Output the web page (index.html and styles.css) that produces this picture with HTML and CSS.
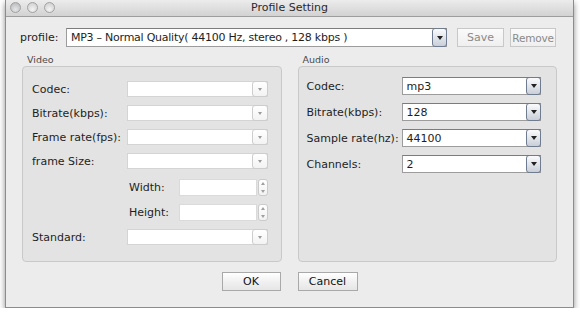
FILE: index.html
```html
<!DOCTYPE html>
<html lang="en">
<head>
    <meta charset="UTF-8">
    <meta name="viewport" content="width=device-width, initial-scale=1.0">
    <title>Profile Setting</title>
    <link rel="stylesheet" href="styles.css">
</head>
<body>
    <div class="window">
        <div class="titlebar">
            <div class="lights">
                <span class="light"></span>
                <span class="light"></span>
                <span class="light"></span>
            </div>
            <div class="title">Profile Setting</div>
        </div>

        <div class="content">
            <div class="profile-row">
                <label class="profile-label">profile:</label>
                <div class="select active profile-select">
                    <span class="value">MP3 – Normal Quality( 44100 Hz, stereo , 128 kbps )</span>
                    <span class="arrow"></span>
                </div>
                <button class="btn btn-disabled btn-save">Save</button>
                <button class="btn btn-disabled btn-remove">Remove</button>
            </div>

            <div class="groups">
                <div class="group">
                    <div class="group-title">Video</div>
                    <div class="group-box video-box">
                        <div class="row">
                            <label>Codec:</label>
                            <div class="select disabled"><span class="value"></span><span class="arrow"></span></div>
                        </div>
                        <div class="row">
                            <label>Bitrate(kbps):</label>
                            <div class="select disabled"><span class="value"></span><span class="arrow"></span></div>
                        </div>
                        <div class="row">
                            <label>Frame rate(fps):</label>
                            <div class="select disabled"><span class="value"></span><span class="arrow"></span></div>
                        </div>
                        <div class="row">
                            <label>frame Size:</label>
                            <div class="select disabled"><span class="value"></span><span class="arrow"></span></div>
                        </div>
                        <div class="row spin-row first-spin">
                            <label>Width:</label>
                            <div class="spin"><span class="value"></span><span class="spinner"><i class="up"></i><i class="down"></i></span></div>
                        </div>
                        <div class="row spin-row">
                            <label>Height:</label>
                            <div class="spin"><span class="value"></span><span class="spinner"><i class="up"></i><i class="down"></i></span></div>
                        </div>
                        <div class="row">
                            <label>Standard:</label>
                            <div class="select disabled"><span class="value"></span><span class="arrow"></span></div>
                        </div>
                    </div>
                </div>

                <div class="group">
                    <div class="group-title">Audio</div>
                    <div class="group-box audio-box">
                        <div class="row">
                            <label>Codec:</label>
                            <div class="select active"><span class="value">mp3</span><span class="arrow"></span></div>
                        </div>
                        <div class="row">
                            <label>Bitrate(kbps):</label>
                            <div class="select active"><span class="value">128</span><span class="arrow"></span></div>
                        </div>
                        <div class="row">
                            <label>Sample rate(hz):</label>
                            <div class="select active"><span class="value">44100</span><span class="arrow"></span></div>
                        </div>
                        <div class="row">
                            <label>Channels:</label>
                            <div class="select active"><span class="value">2</span><span class="arrow"></span></div>
                        </div>
                    </div>
                </div>
            </div>

            <div class="actions">
                <button class="btn btn-ok">OK</button>
                <button class="btn btn-cancel">Cancel</button>
            </div>
        </div>
    </div>
</body>
</html>
```

FILE: styles.css
```css
body {
    margin: 0;
    padding: 0;
    background-color: #ffffff;
    font-family: "DejaVu Sans", "Liberation Sans", sans-serif;
    font-size: 11px;
    color: #1e1e1e;
}

.window {
    margin-left: 5px;
    width: 569px;
    height: 308px;
    box-sizing: border-box;
    background-color: #ececec;
    border: 1px solid #8c8c8c;
    border-top: none;
    box-shadow: 0 3px 6px rgba(0, 0, 0, 0.45);
}

/* title bar */
.titlebar {
    position: relative;
    height: 16px;
    border-bottom: 1px solid #9d9d9d;
    background: linear-gradient(#ececec, #d2d2d2);
}

.lights {
    display: flex;
    gap: 6px;
    padding: 2px 0 0 4px;
}

.light {
    width: 9px;
    height: 9px;
    border-radius: 50%;
    border: 1px solid #a2a2a2;
    background: radial-gradient(circle at 50% 70%, #f4f4f4, #c9c9c9);
}

.light:first-child {
    background: radial-gradient(circle at 50% 70%, #e6e6e6, #b0b4b8);
}

.title {
    position: absolute;
    top: 0;
    left: 0;
    right: 0;
    text-align: center;
    line-height: 16px;
    color: #2a2a2a;
}

/* profile row */
.profile-row {
    display: flex;
    align-items: center;
    height: 19px;
    margin-top: 11px;
    padding-left: 14px;
}

.profile-label {
    width: 46px;
    font-size: 11px;
}

.profile-select {
    width: 381px;
    height: 19px;
}

.profile-select .value {
    font-size: 10.5px;
    letter-spacing: -0.25px;
}

.btn-save {
    margin-left: 10px;
    width: 47px;
}

.btn-remove {
    margin-left: 6px;
    width: 46px;
}

/* buttons */
.btn {
    height: 19px;
    padding: 0;
    font-family: inherit;
    font-size: 11px;
    color: #111;
    border: 1px solid #a9a9a9;
    border-radius: 0;
    background: linear-gradient(#ffffff, #f1f1f1 50%, #e6e6e6);
}

.btn-disabled {
    color: #8a8a8a;
    border-color: #c8c8c8;
    background: linear-gradient(#fafafa, #efefef);
}

.btn-remove {
    font-size: 10.5px;
    letter-spacing: -0.2px;
}

/* selects */
.select {
    display: flex;
    align-items: center;
    box-sizing: border-box;
    position: relative;
    background-color: #ffffff;
    border: 1px solid #9c9c9c;
    border-top-color: #7c7c7c;
}

.select .value {
    flex: 1;
    padding-left: 4px;
    font-size: 11px;
    white-space: nowrap;
}

.select .arrow {
    position: absolute;
    right: -1px;
    top: -1px;
    bottom: -1px;
    width: 15px;
    box-sizing: border-box;
    border: 1px solid #6f7b8f;
    border-radius: 3px;
    background: linear-gradient(#fbfbfc, #dfe3ea 55%, #c9ced8);
}

.select .arrow::after {
    content: "";
    position: absolute;
    left: 50%;
    top: 50%;
    margin: -2px 0 0 -3px;
    border-left: 3px solid transparent;
    border-right: 3px solid transparent;
    border-top: 4px solid #222;
}

.select.disabled {
    border-color: #d4d4d4;
}

.select.disabled .arrow {
    width: 16px;
    border-color: #cdcdcd;
    background: linear-gradient(#ffffff, #f3f3f3);
}

.select.disabled .arrow::after {
    border-top-color: #9a9a9a;
    margin: -1px 0 0 -2px;
    border-left-width: 2px;
    border-right-width: 2px;
    border-top-width: 3px;
}

/* groups */
.groups {
    display: flex;
    gap: 16px;
    margin-top: 6px;
    padding: 0 16px;
}

.group {
    flex: 1;
}

.group-title {
    height: 13px;
    line-height: 13px;
    padding-left: 5px;
    font-size: 9.5px;
    color: #4a4a4a;
}

.group-box {
    height: 196px;
    box-sizing: border-box;
    border: 1px solid #c9c9c9;
    border-radius: 4px;
    background-color: #e3e3e3;
}

.video-box {
    padding: 14px 13px 0 9px;
}

.audio-box {
    padding: 10px 15px 0 8px;
}

.row {
    display: flex;
    align-items: center;
}

.row + .row {
    margin-top: 8px;
}

.row label {
    width: 95px;
    flex-shrink: 0;
    font-size: 11px;
    white-space: nowrap;
}

.row .select {
    flex: 1;
}

.video-box .row {
    height: 16px;
}

.video-box .row .select {
    height: 16px;
}

.audio-box .row {
    height: 18px;
}

.audio-box .row .select {
    height: 18px;
}

/* width / height spinners */
.video-box .spin-row {
    height: 17px;
    padding-left: 97px;
}

.video-box .first-spin {
    margin-top: 10px;
}

.spin-row label {
    width: 50px;
}

.spin {
    flex: 1;
    display: flex;
    height: 17px;
    position: relative;
}

.spin .value {
    flex: 1;
    background-color: #ffffff;
    border: 1px solid #dadada;
}

.spinner {
    width: 10px;
    margin-left: 1px;
    box-sizing: border-box;
    border: 1px solid #cbcbcb;
    border-radius: 3px;
    background: linear-gradient(#ffffff, #f2f2f2);
    display: flex;
    flex-direction: column;
    align-items: center;
    justify-content: space-around;
}

.spinner i {
    width: 0;
    height: 0;
    border-left: 2px solid transparent;
    border-right: 2px solid transparent;
}

.spinner .up {
    border-bottom: 3px solid #a0a0a0;
}

.spinner .down {
    border-top: 3px solid #a0a0a0;
}

/* OK / Cancel */
.actions {
    display: flex;
    justify-content: center;
    gap: 17px;
    margin-top: 10px;
}

.btn-ok {
    width: 59px;
}

.btn-cancel {
    width: 60px;
}
```
